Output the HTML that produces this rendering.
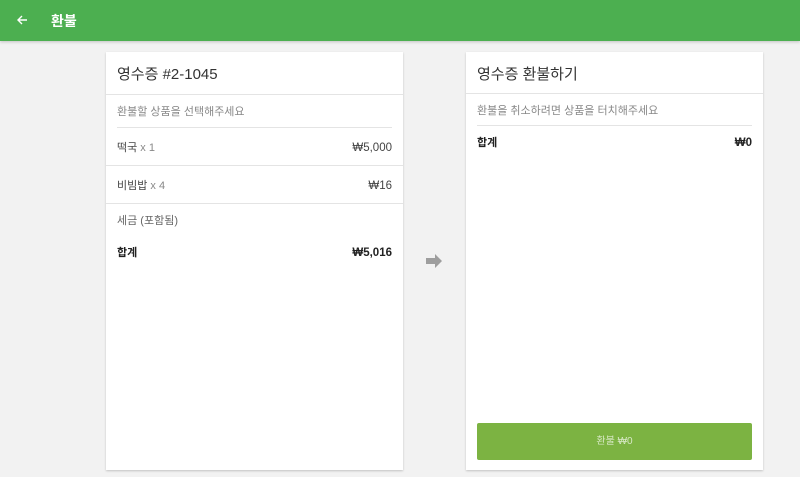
<!DOCTYPE html>
<html><head><meta charset="utf-8"><style>
*{margin:0;padding:0;box-sizing:border-box}
body{width:800px;height:477px;background:#f2f2f2;font-family:"Liberation Sans","Noto Sans CJK KR",sans-serif;position:relative;overflow:hidden;color:#212121}
.hdr{position:absolute;left:0;top:0;width:800px;height:41px;background:#4caf50;box-shadow:0 1px 3px rgba(0,0,0,.2)}
.hdr .t{position:absolute;left:51px;top:11px;color:#fff;font-size:14px;font-weight:bold}
.card{position:absolute;top:52px;width:297px;height:418px;background:#fff;box-shadow:0 1px 2px rgba(0,0,0,.2)}
.abs{position:absolute;line-height:14px}
.title{left:11px;top:14px;font-size:15px;color:#333;line-height:18px}
.sub{left:11px;font-size:11px;color:#888}
.row{left:11px;font-size:11px;color:#444}
.r{right:11px;font-size:11.5px;color:#444}
.b{font-weight:bold;color:#222}
.hl{position:absolute;height:1px;background:#e4e4e4}
.btn{position:absolute;left:11px;top:371px;width:275px;height:37px;background:#7cb342;border-radius:2px;color:#d7e8c4;font-size:10px;text-align:center;line-height:37px}
</style></head><body>
<div class="hdr"><svg class="abs" style="left:16px;top:14px" width="12" height="12" viewBox="0 0 12 12"><path d="M11 6H2M6 2L2 6l4 4" stroke="#fff" stroke-width="1.4" fill="none"/></svg><div class="t">환불</div></div>
<div class="card" style="left:106px">
<div class="abs title">영수증 #2-1045</div>
<div class="hl" style="left:0;right:0;top:42px"></div>
<div class="abs sub" style="top:53px">환불할 상품을 선택해주세요</div>
<div class="hl" style="left:11px;right:11px;top:75px"></div>
<div class="abs row" style="top:89px">떡국 <span style="color:#888">x 1</span></div><div class="abs r" style="top:89px">₩5,000</div>
<div class="hl" style="left:0;right:0;top:113px"></div>
<div class="abs row" style="top:127px">비빔밥 <span style="color:#888">x 4</span></div><div class="abs r" style="top:127px">₩16</div>
<div class="hl" style="left:0;right:0;top:151px"></div>
<div class="abs row" style="top:162px;color:#666">세금 (포함됨)</div>
<div class="abs row b" style="top:194px">합계</div><div class="abs r b" style="top:194px">₩5,016</div>
</div>
<svg class="abs" style="left:425px;top:253px" width="18" height="16" viewBox="0 0 18 16"><path d="M1 5h9V1l7 7-7 7v-4H1z" fill="#9e9e9e"/></svg>
<div class="card" style="left:466px">
<div class="abs title">영수증 환불하기</div>
<div class="hl" style="left:0;right:0;top:41px"></div>
<div class="abs sub" style="top:52px">환불을 취소하려면 상품을 터치해주세요</div>
<div class="hl" style="left:11px;right:11px;top:73px"></div>
<div class="abs row b" style="top:84px">합계</div><div class="abs r b" style="top:84px">₩0</div>
<div class="btn">환불 ₩0</div>
</div>
</body></html>
